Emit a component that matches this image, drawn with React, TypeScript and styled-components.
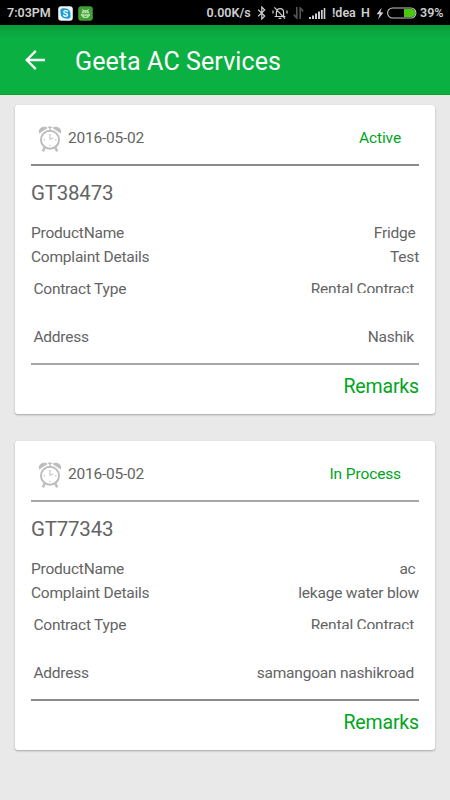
import React from "react";
import styled, { createGlobalStyle } from "styled-components";

const GlobalStyle = createGlobalStyle`
  * { box-sizing: border-box; }
  html, body { margin: 0; padding: 0; background: #e9e9e9; }
  body { font-family: Roboto, "Liberation Sans", sans-serif; }
`;

const Screen = styled.div`
  width: 450px;
  height: 800px;
  overflow: hidden;
  background: #e9e9e9;
  display: flex;
  flex-direction: column;
`;

const StatusBar = styled.header`
  height: 25px;
  flex: none;
  background: #000;
  color: #cfcfcf;
  display: flex;
  align-items: center;
  padding: 1px 8px 0 7px;
  font-size: 12.5px;
  font-weight: 600;
  line-height: 24px;
  white-space: nowrap;
  svg { display: block; flex: none; }
`;

const StatusText = styled.span<{ $width: number; $gap?: number }>`
  width: ${(p) => p.$width}px;
  margin-right: ${(p) => p.$gap ?? 0}px;
  flex: none;
`;

const Icons = styled.div<{ $gap: number; $end?: number }>`
  display: flex;
  align-items: center;
  gap: ${(p) => p.$gap}px;
  margin-right: ${(p) => p.$end ?? 0}px;
`;

const Spacer = styled.div`
  flex: 1;
`;

const AppBar = styled.div`
  height: 70px;
  flex: none;
  display: flex;
  align-items: center;
  padding: 1px 0 0 25px;
  gap: 30px;
  background: linear-gradient(#0a9a3a 0, #0aa53e 6px, #0bb043 14px, #0bb043 100%);
  border-bottom: 1px solid #0aa51f;
`;

const Title = styled.h1`
  margin: 3px 0 0;
  color: #fff;
  font-size: 25px;
  font-weight: 400;
  line-height: 30px;
  letter-spacing: 0.1px;
`;

const List = styled.main`
  display: flex;
  flex-direction: column;
  gap: 27px;
  padding: 10px 15px;
`;

const Card = styled.article`
  height: 309px;
  padding: 0 16px;
  border-radius: 3px;
  background: #fff;
  box-shadow: 0 1px 2px rgba(0, 0, 0, 0.3);
  color: #646464;
  font-size: 15.5px;
  letter-spacing: -0.22px;
`;

const CardHead = styled.div`
  height: 59px;
  padding: 8px 18px 0 7px;
  display: flex;
  align-items: center;
`;

const DateText = styled.span`
  margin: 0 0 2px 6px;
  flex: 1;
`;

const Status = styled.span`
  color: #00a51c;
  margin-bottom: 2px;
  letter-spacing: -0.12px;
`;

const Divider = styled.div<{ $light?: boolean }>`
  height: 2px;
  background: ${(p) => (p.$light ? "#a6a6a6" : "#8a8a8a")};
`;

const Ticket = styled.h2`
  margin: 0 0 16px;
  padding-top: 13px;
  height: 39px;
  font-size: 20.5px;
  line-height: 28px;
  font-weight: 400;
`;

const Row = styled.div<{ $inset?: number; $end?: number; $top?: number }>`
  height: 24px;
  line-height: 24px;
  margin-top: ${(p) => p.$top ?? 0}px;
  padding-left: ${(p) => p.$inset ?? 0}px;
  padding-right: ${(p) => p.$end ?? 0}px;
  display: flex;
  justify-content: space-between;
`;

const Value = styled.span<{ $clipped?: boolean }>`
  height: ${(p) => (p.$clipped ? 16 : 24)}px;
  overflow: ${(p) => (p.$clipped ? "hidden" : "visible")};
`;

const Details = styled.section`
  height: 142px;
`;

const Remarks = styled.div`
  padding-top: 8px;
  line-height: 28px;
  font-size: 19.5px;
  letter-spacing: -0.15px;
  text-align: right;
  color: #00a51c;
`;

const SkypeIcon = () => (
  <svg width="15" height="15" viewBox="0 0 15 15">
    <rect x="0.2" y="0.2" width="14.6" height="14.6" rx="3" fill="#f1f5f7" />
    <circle cx="7.5" cy="7.5" r="4.9" fill="#159bd9" />
    <circle cx="5.2" cy="5" r="2.8" fill="#159bd9" />
    <circle cx="9.8" cy="10" r="2.8" fill="#159bd9" />
    <path d="M9.5 5.6C8.9 4.3 5.8 4.3 5.8 6c0 1.8 3.8 1 3.8 2.9 0 1.8-3.6 1.7-4.2.2" fill="none" stroke="#fff" strokeWidth="1.3" strokeLinecap="round" />
  </svg>
);

const DroidIcon = () => (
  <svg width="15" height="15" viewBox="0 0 15 15">
    <rect x="0.2" y="0.2" width="14.6" height="14.6" rx="3" fill="#3f9f35" />
    <path d="M4.5 3.2 5.8 5M10.5 3.2 9.2 5M3.2 8 4 10M11.8 8 11 10" stroke="#d6efcc" strokeWidth="1" />
    <path d="M3.8 7.2a3.7 3.2 0 0 1 7.4 0v2a3.7 2.9 0 0 1-7.4 0z" fill="#b5dfa6" />
    <path d="M4 7.8h7M6 6.2h.8M8.5 6.2h.8M6 10q1.5 1 3 0" stroke="#3f9f35" strokeWidth="1" fill="none" />
  </svg>
);

const BluetoothIcon = () => (
  <svg width="10" height="14" viewBox="0 0 10 14">
    <path d="m1.2 3.8 6.5 6.2L4.8 13V1l2.9 3-6.5 6.2" fill="none" stroke="#cfcfcf" strokeWidth="1.2" />
  </svg>
);

const MutedBellIcon = () => (
  <svg width="16" height="14" viewBox="0 0 16 14" fill="none" stroke="#cfcfcf" strokeWidth="1.2">
    <path d="M2.6 10.5h10.8M4.4 10.2V6.4C4.4 1.3 11.6 1.3 11.6 6.4v3.8M6.6 12.4h2.8M2.4 1.4 13 12.6M1 4.4v3.2M15 4.4v3.2" />
  </svg>
);

const DataIcon = () => (
  <svg width="11" height="12" viewBox="0 0 11 12" fill="none" stroke="#555" strokeWidth="1.6">
    <path d="M3.8 0v11L.8 7.6M7.2 12V1l3 3.4" />
  </svg>
);

const SignalIcon = () => (
  <svg width="17" height="11" viewBox="0 0 17 11" fill="#cfcfcf">
    <path d="M0 9h2v2H0zM3 7.5h2V11H3zM6 5.5h2V11H6zM9 3.5h2V11H9zM12 2h1.7v9H12zM14.7 0h1.6v11h-1.6z" />
  </svg>
);

const BoltIcon = () => (
  <svg width="8" height="13" viewBox="0 0 8 13">
    <path d="M5.8.5.6 7.2l3 .1L2 12.5l5.4-7-3-.2z" fill="#cfcfcf" />
  </svg>
);

const BatteryIcon = () => (
  <svg width="30" height="12" viewBox="0 0 30 12">
    <rect x="0.6" y="1" width="28.3" height="10" rx="5" fill="#000" stroke="#c6c6c6" strokeWidth="1.1" />
    <path d="M17 2h7.2a4 4 0 0 1 0 8H17z" fill="#4cc80c" />
  </svg>
);

const BackIcon = () => (
  <svg width="20" height="20" viewBox="0 0 20 20" fill="none" stroke="#fff" strokeWidth="2.3">
    <path d="M10.8.9 1.7 10l9.1 9.1M1.5 10H20" />
  </svg>
);

const AlarmIcon = () => (
  <svg width="24" height="26" viewBox="0 0 24 26" fill="none" stroke="#bdbdbd">
    <path d="M1.2 7.6C-.4 4 3 .6 6.5.8c1.4 0 2.4.5 3.2 1.2zM22.8 7.6c1.6-3.6-1.8-7-5.3-6.8-1.4 0-2.4.5-3.2 1.2z" fill="#bdbdbd" stroke="none" />
    <circle cx="12" cy="13.7" r="9.8" stroke="#fff" strokeWidth="2.4" />
    <circle cx="12" cy="13.7" r="9" strokeWidth="2" />
    <path d="M10.2 1.2h3.6M12 1v4" strokeWidth="1.4" />
    <path d="m6.8 21.4-2 4M17.2 21.4l2 4" strokeWidth="2.4" />
    <path d="M12 8v5.7l3.4-2M5.5 13.7H7M17 13.7h1.5M12 18.7v1.5" strokeWidth="1" />
  </svg>
);

interface Complaint {
  id: string;
  date: string;
  status: string;
  product: string;
  details: string;
  contract: string;
  address: string;
}

const complaints: Complaint[] = [
  { id: "GT38473", date: "2016-05-02", status: "Active", product: "Fridge", details: "Test", contract: "Rental Contract", address: "Nashik" },
  { id: "GT77343", date: "2016-05-02", status: "In Process", product: "ac", details: "lekage water blow", contract: "Rental Contract", address: "samangoan nashikroad" },
];

const ComplaintCard = ({ item, alternate }: { item: Complaint; alternate: boolean }) => (
  <Card>
    <CardHead>
      <AlarmIcon />
      <DateText>{item.date}</DateText>
      <Status>{item.status}</Status>
    </CardHead>
    <Divider $light={alternate} />
    <Ticket>{item.id}</Ticket>
    <Details>
      <Row $end={3.5}>
        <span>ProductName</span>
        <Value>{item.product}</Value>
      </Row>
      <Row>
        <span>Complaint Details</span>
        <Value>{item.details}</Value>
      </Row>
      <Row $inset={2.4} $end={5} $top={8}>
        <span>Contract Type</span>
        <Value $clipped>{item.contract}</Value>
      </Row>
      <Row $inset={2.4} $end={5} $top={24}>
        <span>Address</span>
        <Value>{item.address}</Value>
      </Row>
    </Details>
    <Divider $light={!alternate} />
    <Remarks>Remarks</Remarks>
  </Card>
);

export default function App() {
  return (
    <>
      <GlobalStyle />
      <Screen>
        <StatusBar>
          <StatusText $width={45} $gap={6}>7:03PM</StatusText>
          <Icons $gap={5}>
            <SkypeIcon />
            <DroidIcon />
          </Icons>
          <Spacer />
          <StatusText $width={45} $gap={5}>0.00K/s</StatusText>
          <Icons $gap={5} $end={6.5}>
            <BluetoothIcon />
            <MutedBellIcon />
            <DataIcon />
            <SignalIcon />
          </Icons>
          <StatusText $width={25} $gap={4}>!dea</StatusText>
          <StatusText $width={10} $gap={5}>H</StatusText>
          <Icons $gap={3} $end={3}>
            <BoltIcon />
            <BatteryIcon />
          </Icons>
          <StatusText $width={22}>39%</StatusText>
        </StatusBar>
        <AppBar>
          <BackIcon />
          <Title>Geeta AC Services</Title>
        </AppBar>
        <List>
          {complaints.map((item, index) => (
            <ComplaintCard key={item.id} item={item} alternate={index % 2 === 1} />
          ))}
        </List>
      </Screen>
    </>
  );
}
